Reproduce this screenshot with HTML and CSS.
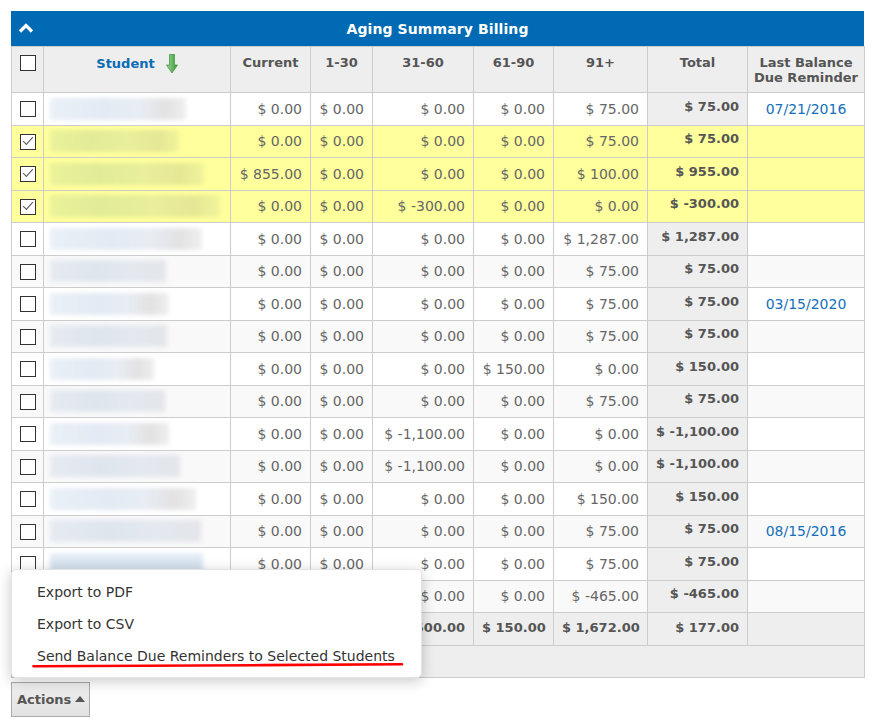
FILE: index.html
```html
<!DOCTYPE html>
<html>
<head>
<meta charset="utf-8">
<link rel="stylesheet" href="styles.css">
</head>
<body>
<div class="page">
  <div class="panel">
    <div class="titlebar">
      <svg class="chev" width="16" height="10" viewBox="0 0 16 10"><polyline points="2,8.5 8,2.5 14,8.5" fill="none" stroke="#fff" stroke-width="3.2" stroke-linejoin="miter"/></svg>
      <span class="title">Aging Summary Billing</span>
    </div>
    <table class="grid">
      <colgroup>
        <col class="c-chk"><col class="c-stu"><col class="c-cur"><col class="c-130"><col class="c-3160"><col class="c-6190"><col class="c-91"><col class="c-tot"><col class="c-last">
      </colgroup>
      <thead>
        <tr class="head">
          <th><span class="cb"></span></th>
          <th><span class="sortlink">Student</span><svg class="sortarrow" width="12" height="20" viewBox="0 0 12 20"><defs><linearGradient id="g" x1="0" y1="0" x2="1" y2="0"><stop offset="0" stop-color="#9fd898"/><stop offset="1" stop-color="#379636"/></linearGradient></defs><path d="M3.5 0.5 H8.5 V11 H11.5 L6 19 L0.5 11 H3.5 Z" fill="url(#g)" stroke="#44993f" stroke-width="0.8"/></svg></th>
          <th>Current</th>
          <th>1-30</th>
          <th>31-60</th>
          <th>61-90</th>
          <th>91+</th>
          <th>Total</th>
          <th>Last Balance Due Reminder</th>
        </tr>
      </thead>
      <tbody>
        <tr class="odd"><td class="chk"><span class="cb"></span></td><td class="stu"><span class="blur" style="width:136px"></span></td><td>$ 0.00</td><td>$ 0.00</td><td>$ 0.00</td><td>$ 0.00</td><td>$ 75.00</td><td class="tot">$ 75.00</td><td class="date">07/21/2016</td></tr>
        <tr class="sel"><td class="chk"><span class="cb on"></span></td><td class="stu"><span class="blur y" style="width:129px"></span></td><td>$ 0.00</td><td>$ 0.00</td><td>$ 0.00</td><td>$ 0.00</td><td>$ 75.00</td><td class="tot">$ 75.00</td><td class="date"></td></tr>
        <tr class="sel"><td class="chk"><span class="cb on"></span></td><td class="stu"><span class="blur y" style="width:154px"></span></td><td>$ 855.00</td><td>$ 0.00</td><td>$ 0.00</td><td>$ 0.00</td><td>$ 100.00</td><td class="tot">$ 955.00</td><td class="date"></td></tr>
        <tr class="sel"><td class="chk"><span class="cb on"></span></td><td class="stu"><span class="blur y" style="width:170px"></span></td><td>$ 0.00</td><td>$ 0.00</td><td>$ -300.00</td><td>$ 0.00</td><td>$ 0.00</td><td class="tot">$ -300.00</td><td class="date"></td></tr>
        <tr class="odd"><td class="chk"><span class="cb"></span></td><td class="stu"><span class="blur" style="width:152px"></span></td><td>$ 0.00</td><td>$ 0.00</td><td>$ 0.00</td><td>$ 0.00</td><td>$ 1,287.00</td><td class="tot">$ 1,287.00</td><td class="date"></td></tr>
        <tr class="even"><td class="chk"><span class="cb"></span></td><td class="stu"><span class="blur g" style="width:116px"></span></td><td>$ 0.00</td><td>$ 0.00</td><td>$ 0.00</td><td>$ 0.00</td><td>$ 75.00</td><td class="tot">$ 75.00</td><td class="date"></td></tr>
        <tr class="odd"><td class="chk"><span class="cb"></span></td><td class="stu"><span class="blur" style="width:119px"></span></td><td>$ 0.00</td><td>$ 0.00</td><td>$ 0.00</td><td>$ 0.00</td><td>$ 75.00</td><td class="tot">$ 75.00</td><td class="date">03/15/2020</td></tr>
        <tr class="even"><td class="chk"><span class="cb"></span></td><td class="stu"><span class="blur g" style="width:117px"></span></td><td>$ 0.00</td><td>$ 0.00</td><td>$ 0.00</td><td>$ 0.00</td><td>$ 75.00</td><td class="tot">$ 75.00</td><td class="date"></td></tr>
        <tr class="odd"><td class="chk"><span class="cb"></span></td><td class="stu"><span class="blur" style="width:104px"></span></td><td>$ 0.00</td><td>$ 0.00</td><td>$ 0.00</td><td>$ 150.00</td><td>$ 0.00</td><td class="tot">$ 150.00</td><td class="date"></td></tr>
        <tr class="even"><td class="chk"><span class="cb"></span></td><td class="stu"><span class="blur g" style="width:115px"></span></td><td>$ 0.00</td><td>$ 0.00</td><td>$ 0.00</td><td>$ 0.00</td><td>$ 75.00</td><td class="tot">$ 75.00</td><td class="date"></td></tr>
        <tr class="odd"><td class="chk"><span class="cb"></span></td><td class="stu"><span class="blur" style="width:119px"></span></td><td>$ 0.00</td><td>$ 0.00</td><td>$ -1,100.00</td><td>$ 0.00</td><td>$ 0.00</td><td class="tot">$ -1,100.00</td><td class="date"></td></tr>
        <tr class="even"><td class="chk"><span class="cb"></span></td><td class="stu"><span class="blur g" style="width:130px"></span></td><td>$ 0.00</td><td>$ 0.00</td><td>$ -1,100.00</td><td>$ 0.00</td><td>$ 0.00</td><td class="tot">$ -1,100.00</td><td class="date"></td></tr>
        <tr class="odd"><td class="chk"><span class="cb"></span></td><td class="stu"><span class="blur" style="width:146px"></span></td><td>$ 0.00</td><td>$ 0.00</td><td>$ 0.00</td><td>$ 0.00</td><td>$ 150.00</td><td class="tot">$ 150.00</td><td class="date"></td></tr>
        <tr class="even"><td class="chk"><span class="cb"></span></td><td class="stu"><span class="blur g" style="width:151px"></span></td><td>$ 0.00</td><td>$ 0.00</td><td>$ 0.00</td><td>$ 0.00</td><td>$ 75.00</td><td class="tot">$ 75.00</td><td class="date">08/15/2016</td></tr>
        <tr class="odd"><td class="chk"><span class="cb"></span></td><td class="stu"><span class="blur b" style="width:153px"></span></td><td>$ 0.00</td><td>$ 0.00</td><td>$ 0.00</td><td>$ 0.00</td><td>$ 75.00</td><td class="tot">$ 75.00</td><td class="date"></td></tr>
        <tr class="even"><td class="chk"><span class="cb"></span></td><td class="stu"><span class="blur g" style="width:140px"></span></td><td>$ 0.00</td><td>$ 0.00</td><td>$ 0.00</td><td>$ 0.00</td><td>$ -465.00</td><td class="tot">$ -465.00</td><td class="date"></td></tr>
        <tr class="total"><td></td><td></td><td>$ 855.00</td><td>$ 0.00</td><td>$ -2,500.00</td><td>$ 150.00</td><td>$ 1,672.00</td><td>$ 177.00</td><td></td></tr>
        <tr class="foot"><td colspan="9"></td></tr>
      </tbody>
    </table>

    <div class="menu">
      <div class="item">Export to PDF</div>
      <div class="item">Export to CSV</div>
      <div class="item">Send Balance Due Reminders to Selected Students</div>
      <svg class="redline" width="372" height="8" viewBox="0 0 372 8"><path d="M1.5 5.2 C 80 4.6, 250 4.4, 370 3.2" fill="none" stroke="#f00" stroke-width="2.6" stroke-linecap="round"/></svg>
    </div>
  </div>
  <div class="actions-row">
    <button class="actions">Actions<span class="tri"></span></button>
  </div>
</div>
</body>
</html>
```

FILE: styles.css
```css
html, body {
  margin: 0;
  padding: 0;
  background: #fff;
}
body {
  font-family: "DejaVu Sans", Verdana, sans-serif;
  font-size: 14px;
  color: #666;
}
.page {
  padding: 11px 0 0 11px;
}
.panel {
  position: relative;
  width: 853px;
}
.titlebar {
  height: 35px;
  background: #006bb4;
  display: flex;
  align-items: center;
  justify-content: center;
  position: relative;
  color: #fff;
}
.chev {
  position: absolute;
  left: 7px;
  top: 12px;
}
.title {
  font-weight: bold;
  font-size: 14px;
  letter-spacing: 0.1px;
}
.grid {
  width: 853px;
  border-collapse: collapse;
  table-layout: fixed;
}
.c-chk { width: 32px; }
.c-stu { width: 187px; }
.c-cur { width: 80px; }
.c-130 { width: 62px; }
.c-3160 { width: 101px; }
.c-6190 { width: 80px; }
.c-91 { width: 94px; }
.c-tot { width: 100px; }
.c-last { width: 117px; }

.grid th, .grid td {
  border: 1px solid #ccc;
  box-sizing: border-box;
}
.head th {
  background: #eee;
  height: 46px;
  vertical-align: top;
  padding: 8px 2px 0;
  font-size: 13px;
  font-weight: bold;
  color: #555;
  line-height: 15px;
  text-align: center;
}
.head th:first-child {
  padding-top: 7px;
}
.sortlink {
  color: #0a6cb5;
  display: inline-block;
  margin-top: 1px;
}
.sortarrow {
  vertical-align: top;
  margin-left: 11px;
  margin-top: -1px;
}
.grid tbody td {
  height: 32.5px;
  padding: 0 8px;
  text-align: right;
  white-space: nowrap;
  line-height: 16px;
}
tr.odd td { background: #fff; }
tr.even td { background: #f9f9f9; }
tr.sel td { background: #ffff9c; }
td.tot {
  font-weight: bold;
  font-size: 13px;
  color: #555;
  background: #eee !important;
  vertical-align: middle;
  padding-bottom: 4px !important;
}
tr.sel td.tot { background: #ffff9c !important; }
td.chk {
  text-align: center !important;
  padding: 0 !important;
}
td.stu {
  text-align: left !important;
  padding: 0 4px !important;
}
td.date {
  text-align: center !important;
  color: #1470b8;
}
.cb {
  display: inline-block;
  box-sizing: border-box;
  width: 16px;
  height: 16px;
  border: 1px solid #333;
  background: #fff;
  vertical-align: middle;
  position: relative;
}
.cb.on::after {
  content: "";
  position: absolute;
  left: 2px;
  top: 2px;
  width: 9px;
  height: 4px;
  border-left: 1.5px solid #555;
  border-bottom: 1.5px solid #555;
  transform: rotate(-48deg);
}
.blur {
  display: block;
  height: 22px;
  margin-left: 2px;
  background: linear-gradient(90deg, #eaf0f7 0%, #e3eaf3 40%, #e8edf4 65%, #e2e2e2 85%, #efefef 100%);
  filter: blur(2px);
  border-radius: 2px;
}
.blur.g {
  background: linear-gradient(90deg, #e6ebf2 0%, #dfe5ed 40%, #e4e9ef 70%, #e3e5ea 100%);
}
.blur.y {
  background: linear-gradient(90deg, #eaf29a 0%, #e2eb96 30%, #e9ef9a 60%, #e5e794 85%, #f2f49b 100%);
}
.blur.b {
  background: linear-gradient(180deg, #e8f0f8 0%, #d3e1ef 60%, #e4ecf5 100%);
}
tr.total td {
  background: #eee;
  font-weight: bold;
  font-size: 13px;
  color: #555;
  padding-bottom: 2px;
}
.grid tbody tr.foot td {
  background: #eee;
  height: 32px;
}
.menu {
  position: absolute;
  left: 0;
  top: 558px;
  width: 411px;
  height: 109px;
  box-sizing: border-box;
  background: #fff;
  border-radius: 5px;
  border: 1px solid #e4e4e4;
  box-shadow: 0 3px 14px rgba(0, 0, 0, 0.22);
  padding-top: 6px;
}
.item {
  height: 32px;
  line-height: 32px;
  padding-left: 25px;
  color: #333;
  font-size: 14px;
  white-space: nowrap;
}
.redline {
  position: absolute;
  left: 20px;
  top: 91px;
}
.actions-row {
  margin-top: 4px;
}
.actions {
  font-family: "DejaVu Sans", Verdana, sans-serif;
  font-size: 13px;
  font-weight: bold;
  color: #555;
  height: 35px;
  width: 79px;
  padding: 0 0 0 5px;
  text-align: left;
  border: 1px solid #aaa;
  background: linear-gradient(180deg, #efefef 0%, #e2e2e2 100%);
  border-radius: 0;
  display: flex;
  align-items: center;
}
.tri {
  display: inline-block;
  width: 0;
  height: 0;
  margin-left: 4px;
  border-left: 5px solid transparent;
  border-right: 5px solid transparent;
  border-bottom: 6px solid #555;
}
```
